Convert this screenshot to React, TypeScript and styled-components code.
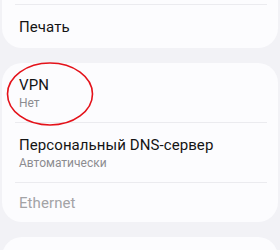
import React from "react";
import styled, { createGlobalStyle } from "styled-components";

const Global = createGlobalStyle`
  html, body { margin: 0; padding: 0; background: #f2f2f6; }
  body { font-family: Roboto, "Noto Sans", sans-serif; overflow: hidden; }
`;

const Page = styled.div`
  display: flex;
  flex-direction: column;
  gap: 15px;
  padding: 0 2px;
  margin-top: -40px;
`;

const Card = styled.div`
  background: #fcfcfe;
  border-radius: 20px;
  display: flex;
  flex-direction: column;
`;

const Row = styled.div<{ $h: number }>`
  position: relative;
  height: ${(p) => p.$h}px;
  padding: 0 17px;
  display: flex;
  flex-direction: column;
  justify-content: center;
`;

const Divider = styled.div`
  height: 1px;
  background: #ebebef;
  margin: 0 11px 0 13px;
`;

const Title = styled.div<{ $disabled?: boolean }>`
  font-size: 15px;
  line-height: 20px;
  letter-spacing: 0.08px;
  color: ${(p) => (p.$disabled ? "#a3a3a6" : "#141414")};
`;

const Sub = styled.div`
  font-size: 12px;
  line-height: 16px;
  color: #8c8c90;
`;

const Mark = styled.svg`
  position: absolute;
  left: 0;
  top: -4px;
  width: 100px;
  height: 72px;
  pointer-events: none;
`;

export default function App() {
  return (
    <>
      <Global />
      <Page>
        <Card>
          <Row $h={44} />
          <Divider />
          <Row $h={43}>
            <Title>Печать</Title>
          </Row>
        </Card>
        <Card>
          <Row $h={59}>
            <Title>VPN</Title>
            <Sub>Нет</Sub>
            <Mark viewBox="0 0 100 72">
              <ellipse cx="48" cy="35" rx="42.5" ry="31" fill="none" stroke="#e4121a" strokeWidth="1.6" />
            </Mark>
          </Row>
          <Divider />
          <Row $h={59}>
            <Title>Персональный DNS-сервер</Title>
            <Sub>Автоматически</Sub>
          </Row>
          <Divider />
          <Row $h={39}>
            <Title $disabled>Ethernet</Title>
          </Row>
        </Card>
        <Card>
          <Row $h={59} />
        </Card>
      </Page>
    </>
  );
}
